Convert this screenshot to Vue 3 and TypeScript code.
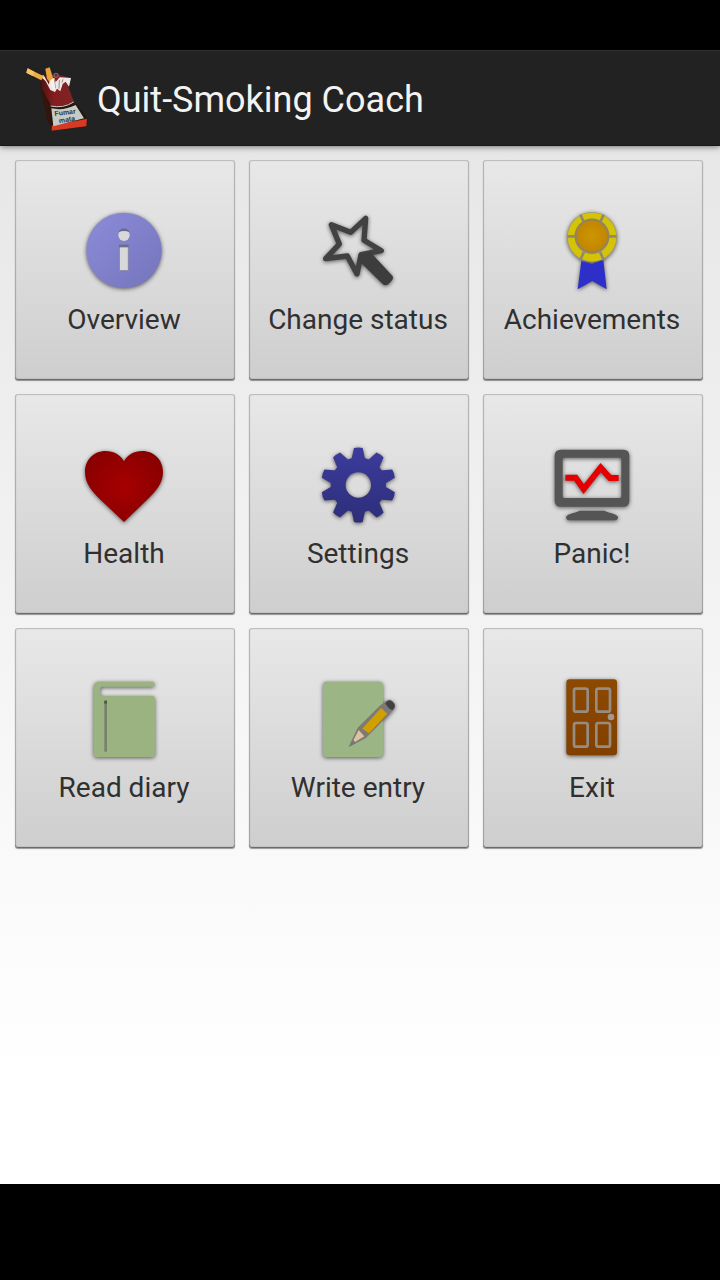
<script setup lang="ts">
interface Tile {
  id: string
  label: string
  viewBox: string
}

const tiles: Tile[] = [
  { id: 'overview', label: 'Overview', viewBox: '0 0 300 300' },
  { id: 'status', label: 'Change status', viewBox: '-3 0 300 300' },
  { id: 'achievements', label: 'Achievements', viewBox: '3 0 300 300' },
  { id: 'health', label: 'Health', viewBox: '0 -3 300 300' },
  { id: 'settings', label: 'Settings', viewBox: '-3 -3 300 300' },
  { id: 'panic', label: 'Panic!', viewBox: '3 -3 300 300' },
  { id: 'read', label: 'Read diary', viewBox: '0 -6 300 300' },
  { id: 'write', label: 'Write entry', viewBox: '-3 -6 300 300' },
  { id: 'exit', label: 'Exit', viewBox: '3 -6 300 300' },
]

const teeth: number[] = Array.from({ length: 10 }, (_, i) => i * 36)
</script>

<template>
  <div class="screen">
    <div class="system-bar top"></div>
    <header class="action-bar">
      <svg class="logo" viewBox="0 0 255 255" aria-hidden="true">
        <defs>
          <linearGradient id="pack" x1="0" x2="1">
            <stop offset="0" stop-color="#4a1210" />
            <stop offset=".4" stop-color="#861d20" />
            <stop offset="1" stop-color="#7c2424" />
          </linearGradient>
        </defs>
        <path d="M74 82 84 70 114 150 112 222 96 190Z" fill="#35140b" />
        <path d="M76 62 100 60 122 54 167 66 160 92 178 142 112 154 80 98Z" fill="url(#pack)" />
        <path d="M76 60 86 58 102 86 104 68 118 66 122 78 134 64 168 66 162 92 152 77 143 84 136 106 126 98 120 108 106 102 92 76Z" fill="#eee7e5" />
        <path d="M118 70 121 97M133 72 132 98M144 70 141 80" stroke="#9b8a88" stroke-width="3" />
        <circle cx="123" cy="58" r="6" fill="none" stroke="#71686a" stroke-width="4" />
        <path d="M38 37 86 61 79 73 34 50Z" fill="#efad43" />
        <path d="M38 37 58 48 53 60 34 50Z" fill="#f7c366" />
        <path d="M91 38 104 34 115 68 103 77 96 68Z" fill="#eaa33b" />
        <path d="M106 72 116 67 121 98 114 101Z" fill="#f8f2ed" />
        <path d="M106 151Q145 159 173 140L187 145 218 188 215 212 108 224Z" fill="#251514" />
        <path d="M110 209 216 188 214 211 110 224Z" fill="#d63a22" />
        <path d="M109 157Q146 165 182 147L207 187 115 211Z" fill="#c6cbc6" />
        <path d="M107 150Q145 158 176 138" fill="none" stroke="#d5c6c2" stroke-width="3" />
        <g class="pack-text">
          <text x="119" y="180" transform="rotate(-7 119 180)">Fumar</text>
          <text x="133" y="202" transform="rotate(-10 133 202)">mata</text>
        </g>
      </svg>
      <h1>Quit-Smoking Coach</h1>
    </header>

    <main>
      <nav class="grid">
        <button v-for="tile in tiles" :key="tile.id" type="button" class="tile">
          <svg class="icon" :viewBox="tile.viewBox" aria-hidden="true">
            <g v-if="tile.id === 'overview'">
              <defs>
                <linearGradient id="info" x1="0" y1="0" x2="1" y2="1">
                  <stop offset="0" stop-color="#8b8bd8" />
                  <stop offset="1" stop-color="#7575bd" />
                </linearGradient>
              </defs>
              <circle cx="147" cy="151" r="113" fill="url(#info)" />
              <circle cx="147" cy="106" r="17" fill="#d8d8d8" />
              <path d="M131 97A17 17 0 0 1 163 97Q147 89 131 97Z" fill="#69698c" />
              <path d="M133 135H160V212H133Z" fill="#d8d8d8" stroke="#8585ad" stroke-width="3" />
              <path d="M132 134H161V142H132Z" fill="#6c6c8a" />
            </g>
            <g v-else-if="tile.id === 'status'">
              <path d="M64 74 122 97 167 55 162 121 214 152 153 164 141 222 112 168 47 176 88 132Z" fill="none" stroke="#414141" stroke-width="16" stroke-linejoin="round" />
              <path d="M146 164 181 156 247 227Q252 235 245 242L235 253Q225 259 217 251L148 184Z" fill="#3d3d3d" />
            </g>
            <g v-else-if="tile.id === 'achievements'">
              <defs>
                <radialGradient id="medal">
                  <stop offset="0" stop-color="#cc9600" />
                  <stop offset="1" stop-color="#c28500" />
                </radialGradient>
              </defs>
              <path d="M118 183 150 191 184 180 194 268 151 243 107 268Z" fill="#2e2ec8" />
              <circle cx="150" cy="111" r="75" fill="#a49b6d" />
              <circle cx="150" cy="111" r="62" fill="none" stroke="#d5c405" stroke-width="21" />
              <path d="M115 44 126 68M185 44 174 68M76 109H101M199 109H224M115 180 126 155M185 180 174 155" stroke="#8f8a6d" stroke-width="8" />
              <circle cx="150" cy="108" r="49" fill="url(#medal)" stroke="#96835b" stroke-width="7" />
            </g>
            <g v-else-if="tile.id === 'health'">
              <defs>
                <radialGradient id="heart" cx=".5" cy=".5" r=".6">
                  <stop offset="0" stop-color="#a60000" />
                  <stop offset="1" stop-color="#880000" />
                </radialGradient>
              </defs>
              <path d="M147 79C137 59 116 48 91 48C56 48 30 75 30 111C30 147 51 169 78 196L147 261 215 196C242 169 264 147 264 111C264 75 237 48 202 48C177 48 157 59 147 79Z" fill="url(#heart)" />
            </g>
            <g v-else-if="tile.id === 'settings'">
              <defs>
                <linearGradient id="gear" x1="0" y1="0" x2="0" y2="1">
                  <stop offset="0" stop-color="#3c3c9f" />
                  <stop offset="1" stop-color="#2d2d77" />
                </linearGradient>
                <mask id="gear-mask" maskUnits="userSpaceOnUse" x="0" y="0" width="300" height="300">
                  <circle cx="145" cy="150" r="83" fill="white" />
                  <path v-for="angle in teeth" :key="angle" d="M124 75 132 39Q145 36 158 39L166 75Z" fill="white" :transform="`rotate(${angle} 145 150)`" />
                  <circle cx="145" cy="150" r="38" fill="black" />
                </mask>
              </defs>
              <path d="M20 25H270V275H20Z" fill="url(#gear)" mask="url(#gear-mask)" />
            </g>
            <g v-else-if="tile.id === 'panic'">
              <path fill-rule="evenodd" d="M57 44H244Q262 44 262 62V197Q262 215 244 215H57Q38 215 38 197V62Q38 44 57 44ZM67 68Q62 68 62 73V184Q62 189 67 189H233Q238 189 238 184V73Q238 68 233 68Z" fill="#555" />
              <path d="M73 244Q70 253 80 256H220Q231 253 227 244C220 235 199 234 187 227H113C101 234 80 235 73 244Z" fill="#555" />
              <path d="M70 128H101L125 162 176 98 204 129H230" fill="none" stroke="#e40000" stroke-width="18" stroke-linejoin="miter" />
            </g>
            <g v-else-if="tile.id === 'read'">
              <path d="M72 35H232Q239 35 239 42Q239 50 232 50H82Q75 51 75 63V70Q75 78 84 78H230Q240 78 240 88V252Q240 261 230 261H67Q56 261 56 251V52Q56 35 72 35Z" fill="#9bb381" />
              <path d="M88 92H96V245H88Z" fill="#77816f" />
              <path d="M88 92H96V101H88Z" fill="#4d5546" />
            </g>
            <g v-else-if="tile.id === 'write'">
              <path d="M48 35H208Q219 35 219 46V250Q219 261 208 261H48Q39 261 39 250V46Q39 35 48 35Z" fill="#9bb584" />
              <path d="M116 231 143 173 211 106 229 93Q241 84 252 98Q259 107 251 117L238 133 168 204Z" fill="#7e7974" />
              <path d="M124 223 146 180 163 199Z" fill="#dac5a0" />
              <path d="M117 230 128 208 138 219Z" fill="#777" />
              <path d="M157 176 213 114 232 131 177 190Z" fill="#d0a000" />
              <path d="M226 100Q237 84 250 98Q260 109 248 120Q236 119 226 100Z" fill="#414141" />
            </g>
            <g v-else>
              <defs>
                <linearGradient id="door" x1="0" y1="0" x2="0" y2="1">
                  <stop offset="0" stop-color="#8c4900" />
                  <stop offset="1" stop-color="#824000" />
                </linearGradient>
              </defs>
              <rect x="73" y="28" width="152" height="228" rx="10" fill="url(#door)" />
              <g fill="none" stroke="#968c82" stroke-width="8">
                <rect x="96" y="56" width="41" height="69" rx="6" />
                <rect x="163" y="56" width="41" height="69" rx="6" />
                <rect x="96" y="159" width="41" height="71" rx="6" />
                <rect x="163" y="159" width="41" height="71" rx="6" />
              </g>
              <circle cx="207" cy="141" r="10" fill="#a6978a" />
            </g>
          </svg>
          <span class="label">{{ tile.label }}</span>
        </button>
      </nav>
    </main>
    <div class="system-bar bottom"></div>
  </div>
</template>

<style>
body {
  margin: 0;
}
</style>

<style scoped>
.screen {
  display: flex;
  flex-direction: column;
  min-height: 100vh;
  font-family: Roboto, "Noto Sans", sans-serif;
}
.system-bar {
  flex: none;
  background: #000;
}
.top {
  height: 50px;
}
.bottom {
  height: 96px;
}
.action-bar {
  position: relative;
  box-sizing: border-box;
  height: 96px;
  flex: none;
  display: flex;
  align-items: center;
  padding-left: 15px;
  background: #222;
  border-top: 1px solid #303030;
  border-bottom: 1px solid #181818;
  box-shadow: 0 1px 6px rgba(0, 0, 0, 0.5);
}
.logo {
  width: 85px;
  height: 85px;
}
h1 {
  margin: 0 0 0 -3px;
  padding-top: 4px;
  font-size: 36px;
  line-height: 48px;
  font-weight: 400;
  color: #f3f3f3;
  white-space: nowrap;
}
.pack-text {
  font: bold 21px "Liberation Sans", sans-serif;
  fill: #333;
}
main {
  flex: 1;
  background: linear-gradient(#e7e7e7, #fff 90%);
}
.grid {
  display: grid;
  grid-template-columns: repeat(3, minmax(0, 1fr));
  gap: 14px;
  padding: 14px 17px 14px 15px;
}
.tile {
  aspect-ratio: 1;
  display: flex;
  flex-direction: column;
  align-items: center;
  justify-content: flex-start;
  padding: 40px 0 0;
  border: 0;
  border-radius: 3px;
  background: linear-gradient(#e8e8e8, #cecece);
  box-shadow: inset 0 0 1px 1px rgba(0, 0, 0, 0.2), inset 0 -1px 1px rgba(0, 0, 0, 0.4), 0 1px 1px rgba(0, 0, 0, 0.4);
  color: #303030;
  font: inherit;
  cursor: pointer;
}
.icon {
  width: 100px;
  height: 100px;
  flex: none;
  filter: drop-shadow(0 1px 2px rgba(0, 0, 0, 0.6));
}
.label {
  margin-top: 2px;
  padding-right: 2px;
  font-size: 28px;
  line-height: 36px;
  white-space: nowrap;
}
</style>
